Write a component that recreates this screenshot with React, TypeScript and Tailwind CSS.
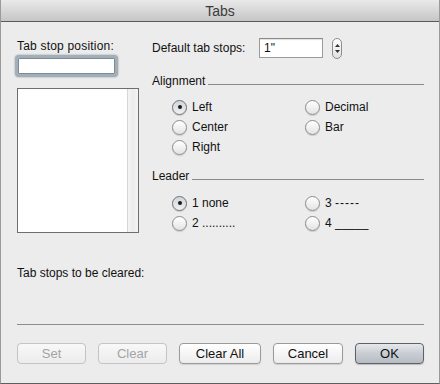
import React from 'react';

const font = { fontFamily: '"Liberation Sans", Arial, sans-serif' };

function Radio({ label, checked }: { label: React.ReactNode; checked?: boolean }) {
  return (
    <div className="flex items-center h-[20px]">
      <span
        className={`w-[15px] h-[15px] rounded-full border flex items-center justify-center shadow-[0_1px_1px_rgba(0,0,0,0.15)] ${
          checked
            ? 'border-[#6d7177] bg-gradient-to-b from-[#d2d5da] to-[#eef0f2]'
            : 'border-[#8d8d8d] bg-gradient-to-b from-[#ffffff] to-[#e3e3e3]'
        }`}
      >
        {checked && <span className="w-[4px] h-[4px] rounded-full bg-[#1a1a1a]" />}
      </span>
      <span className="ml-[5px] text-[12px] leading-[14px] text-[#111]">{label}</span>
    </div>
  );
}

function GroupHeader({ title }: { title: string }) {
  return (
    <div className="flex items-end h-[14px]">
      <span className="text-[12px] leading-[14px] text-[#111]">{title}</span>
      <div className="flex-1 h-px bg-[#8a8a8a] ml-[3px] mb-[3px]" />
    </div>
  );
}

function Btn({ label, w, disabled, primary }: { label: string; w: string; disabled?: boolean; primary?: boolean }) {
  let cls =
    'border-[#9a9a9a] bg-gradient-to-b from-[#ffffff] to-[#ececec] text-[#111] shadow-[0_1px_1px_rgba(0,0,0,0.12)]';
  if (disabled) cls = 'border-[#c4c4c4] bg-gradient-to-b from-[#f8f8f8] to-[#ececec] text-[#a3a3a3]';
  if (primary)
    cls =
      'border-[#5c626b] bg-gradient-to-b from-[#e6e8eb] via-[#c9cdd3] to-[#b7bcc4] text-[#111] shadow-[0_1px_1px_rgba(0,0,0,0.2)]';
  return (
    <button className={`${w} h-[21px] rounded-[4px] border text-[13px] leading-[15px] flex items-center justify-center ${cls}`}>
      {label}
    </button>
  );
}

export default function App() {
  return (
    <div
      style={font}
      className="w-[440px] h-[384px] flex flex-col bg-[#ececec] border-l border-r border-b border-l-[#9a9a9a] border-r-[#9a9a9a] border-b-[#5e5e5e]"
    >
      {/* barra de título */}
      <div className="h-[22px] shrink-0 border-b border-[#5a5a5a] bg-gradient-to-b from-[#e9e9e9] to-[#c6c6c6] flex items-center justify-center">
        <span className="text-[14px] leading-[16px] text-[#3b3b3b]">Tabs</span>
      </div>

      <div className="flex-1 flex flex-col pl-[16px] pr-[15px]">
        <div className="flex">
          {/* columna izquierda */}
          <div className="w-[122px] flex flex-col">
            <div className="mt-[17px] text-[12px] leading-[14px] text-[#111] tracking-[0.2px]">Tab stop position:</div>
            <div className="mt-[2px] ml-[-2px] w-[103px] h-[22px] rounded-[4px] border-[3px] border-[#a3afb8] bg-white shadow-[inset_0_0_0_1px_#7f8b94,0_0_2px_0_rgba(100,115,125,0.7)]" />
            <div className="mt-[11px] h-[145px] border border-[#6e6e6e] bg-white flex justify-end">
              <div className="w-[11px] h-full border-l border-[#d6d6d6] bg-gradient-to-r from-[#f4f4f4] via-[#ececec] to-[#f4f4f4]" />
            </div>
          </div>

          {/* columna derecha */}
          <div className="ml-[13px] w-[272px] flex flex-col">
            <div className="mt-[16px] flex items-center h-[20px]">
              <span className="text-[12px] leading-[14px] text-[#111] w-[107px]">Default tab stops:</span>
              <div className="w-[64px] h-[20px] border border-[#9c9c9c] border-t-[#8a8a8a] bg-white shadow-[inset_0_1px_1px_rgba(0,0,0,0.12)] flex items-center pl-[4px]">
                <span className="text-[12px] leading-[14px] text-[#111]">1"</span>
              </div>
              <div className="ml-[9px] w-[10px] h-[21px] rounded-[5px] border border-[#8d8d8d] bg-gradient-to-b from-[#ffffff] to-[#e2e2e2] flex flex-col items-center justify-center gap-[3px]">
                <svg width="5" height="3" viewBox="0 0 5 3"><path d="M2.5 0 L5 3 L0 3 Z" fill="#333" /></svg>
                <svg width="5" height="3" viewBox="0 0 5 3"><path d="M0 0 L5 0 L2.5 3 Z" fill="#333" /></svg>
              </div>
            </div>

            <div className="mt-[16px]">
              <GroupHeader title="Alignment" />
            </div>
            <div className="mt-[9px] pl-[20px] grid grid-cols-[133px_1fr]">
              <Radio label="Left" checked />
              <Radio label="Decimal" />
              <Radio label="Center" />
              <Radio label="Bar" />
              <Radio label="Right" />
            </div>

            <div className="mt-[12px]">
              <GroupHeader title="Leader" />
            </div>
            <div className="mt-[10px] pl-[20px] grid grid-cols-[133px_1fr]">
              <Radio label="1 none" checked />
              <Radio label={<span>3 <span className="tracking-[1px]">-----</span></span>} />
              <Radio label="2 .........." />
              <Radio label={<span>4 _____</span>} />
            </div>
          </div>
        </div>

        <div className="mt-[33px] text-[12px] leading-[14px] text-[#111]">Tab stops to be cleared:</div>

        <div className="mt-[44px] h-px bg-[#8e8e8e]" />

        <div className="mt-[18px] flex gap-[12px]">
          <Btn label="Set" w="w-[69px]" disabled />
          <Btn label="Clear" w="w-[69px]" disabled />
          <Btn label="Clear All" w="w-[82px]" />
          <Btn label="Cancel" w="w-[70px]" />
          <Btn label="OK" w="w-[69px]" primary />
        </div>
      </div>
    </div>
  );
}
